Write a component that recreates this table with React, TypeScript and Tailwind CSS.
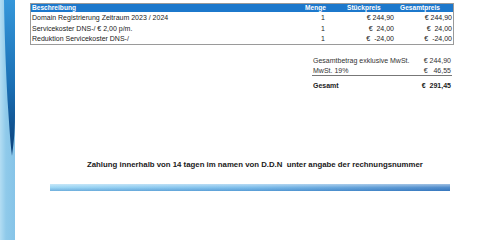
import React from "react";

const rows = [
    { desc: "Domain Registrierung Zeitraum 2023 / 2024", qty: "1", unit: "€ 244,90", total: "€ 244,90" },
    { desc: "Servicekoster DNS-/ € 2,00 p/m.", qty: "1", unit: "€  24,00", total: "€  24,00" },
    { desc: "Reduktion Servicekoster DNS-/", qty: "1", unit: "€  -24,00", total: "€  -24,00" },
];

const SideStrip: React.FC = () => (
    <svg width="15" height="240" viewBox="0 0 15 240" className="shrink-0 block">
        <defs>
            <linearGradient id="light" x1="0" x2="1" y1="0" y2="0">
                <stop offset="0" stopColor="#b3ddf3" />
                <stop offset="0.4" stopColor="#8fcaea" />
                <stop offset="1" stopColor="#86c4e8" />
            </linearGradient>
            <linearGradient id="dark" x1="0" x2="0" y1="0" y2="1">
                <stop offset="0" stopColor="#3597da" />
                <stop offset="0.55" stopColor="#1a6fb4" />
                <stop offset="1" stopColor="#0b3f78" />
            </linearGradient>
        </defs>
        <rect x="0" y="0" width="15" height="240" fill="url(#light)" />
        <path d="M4 0 L15 0 L15 115 C15 135 13 148 12 156 C10 140 9 120 7.5 100 C6 70 4.5 35 4 0 Z" fill="url(#dark)" />
    </svg>
);

export default function App() {
    return (
        <div className="w-[480px] h-[240px] flex bg-white overflow-hidden font-['Liberation_Sans',Arial,sans-serif] text-[#222]">
            <SideStrip />
            <div className="flex-1 flex flex-col pl-[15px] pt-[3px]">
                {/* invoice table */}
                <div className="w-[424px] border border-[#9a9a9a] text-[7px] leading-none">
                    <div className="grid grid-cols-[269px_40px_56px_57px] h-[8px] items-center bg-[#1c78cc] text-white font-bold text-[6.6px]">
                        <div className="pl-[1px]">Beschreibung</div>
                        <div className="pl-[5px]">Menge</div>
                        <div className="pl-[7px]">Stückpreis</div>
                        <div className="pl-[4px]">Gesamtpreis</div>
                    </div>
                    {rows.map((r) => (
                        <div key={r.desc} className="grid grid-cols-[269px_40px_56px_57px] h-[10.7px] items-center whitespace-pre">
                            <div className="pl-[1px]">{r.desc}</div>
                            <div className="text-right pr-[15px]">{r.qty}</div>
                            <div className="text-right pr-[2px]">{r.unit}</div>
                            <div className="text-right pr-[1px]">{r.total}</div>
                        </div>
                    ))}
                </div>

                {/* totals */}
                <div className="ml-[282px] mt-[10px] w-[140px] text-[7px] leading-none text-[#333] whitespace-pre">
                    <div className="flex justify-between h-[10.5px] items-center pl-[1px]">
                        <span>Gesamtbetrag exklusive MwSt.</span>
                        <span className="pr-[1px]">€ 244,90</span>
                    </div>
                    <div className="flex justify-between h-[10.5px] items-center pl-[1px] border-b border-[#777]">
                        <span>MwSt. 19%</span>
                        <span className="pr-[1px]">€   46,55</span>
                    </div>
                    <div className="flex justify-between h-[19px] items-center pl-[1px] font-bold text-[#222]">
                        <span>Gesamt</span>
                        <span className="pr-[1px]">€  291,45</span>
                    </div>
                </div>

                {/* payment note */}
                <div className="mt-[66px] ml-[57px] text-[7.8px] leading-none font-bold text-[#1a1a1a] whitespace-pre">
                    Zahlung innerhalb von 14 tagen im namen von D.D.N  unter angabe der rechnungsnummer
                </div>

                {/* decorative bar */}
                <div className="mt-[15px] ml-[20px] w-[400px] h-[7px] bg-linear-to-r from-[#92d2f3] via-[#6fb6e8] to-[#3f80c6]">
                    <div className="h-full bg-linear-to-b from-white/50 via-white/10 to-[#1d5fa8]/30" />
                </div>
            </div>
        </div>
    );
}
